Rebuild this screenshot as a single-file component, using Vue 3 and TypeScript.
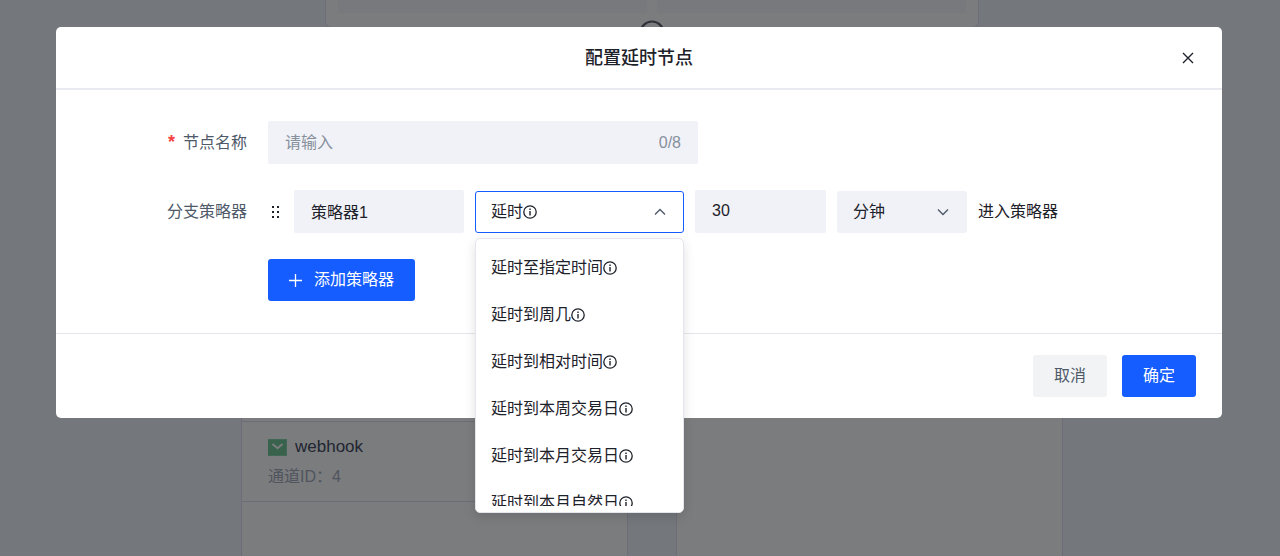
<script setup lang="ts">
import { computed, ref } from 'vue'

const nodeName = ref('')
const nameLimit = 8
const counter = computed(() => `${nodeName.value.length}/${nameLimit}`)

const strategyName = ref('策略器1')
const delayType = ref('延时')
const amount = ref('30')
const unit = ref('分钟')
const units: string[] = ['分钟', '小时', '天']

const delayOptions: string[] = [
  '延时至指定时间',
  '延时到周几',
  '延时到相对时间',
  '延时到本周交易日',
  '延时到本月交易日',
  '延时到本月自然日',
]
</script>

<template>
  <div class="page">
    <div class="canvas" aria-hidden="true">
      <div class="top-card">
        <div class="slot"></div>
        <div class="slot"></div>
        <svg class="anchor" width="26" height="26" viewBox="0 0 26 26" fill="none">
          <circle cx="13" cy="13" r="11.5" stroke="#60656f" stroke-width="2.2" />
        </svg>
      </div>
      <div class="columns">
        <div class="column">
          <div class="channel">
            <div class="channel-title">
              <svg width="19" height="17" viewBox="0 0 19 17" fill="none">
                <rect width="19" height="17" fill="#86d6a8" />
                <rect y="1" width="18" height="15" fill="#76c898" />
                <path d="M4.5 5 9.5 9.2 14.5 5" stroke="#fff" stroke-width="2" />
              </svg>
              <span>webhook</span>
            </div>
            <div class="channel-id">通道ID：4</div>
          </div>
        </div>
        <div class="column"></div>
      </div>
    </div>

    <div class="mask">
      <section class="modal" role="dialog" aria-modal="true" aria-labelledby="dialog-title">
        <header class="modal-header">
          <h1 id="dialog-title">配置延时节点</h1>
          <button class="close" type="button" aria-label="关闭">
            <svg width="12" height="12" viewBox="0 0 12 12" fill="none">
              <path d="M1 1 11 11M11 1 1 11" stroke="#1d2129" stroke-width="1.4" />
            </svg>
          </button>
        </header>

        <form class="modal-body" @submit.prevent>
          <label class="label" for="node-name"><span class="required">*</span>节点名称</label>
          <div class="name-field">
            <input id="node-name" v-model="nodeName" type="text" placeholder="请输入" :maxlength="nameLimit" />
            <span class="counter">{{ counter }}</span>
          </div>

          <label class="label" for="strategy-name">分支策略器</label>
          <div class="strategy">
            <svg class="drag" width="16" height="16" viewBox="0 0 16 16" fill="#1d2129">
              <path d="M4 2h2v2H4zM9 2h2v2H9zM4 7h2v2H4zM9 7h2v2H9zM4 12h2v2H4zM9 12h2v2H9z" />
            </svg>
            <input id="strategy-name" v-model="strategyName" class="text-box strategy-name" type="text" />
            <div class="picker delay open">
              <select v-model="delayType" aria-label="延时类型">
                <option>延时</option>
                <option v-for="option in delayOptions" :key="option">{{ option }}</option>
              </select>
              <svg class="info" width="14" height="14" viewBox="0 0 14 14" fill="none" stroke="#1d2129">
                <circle cx="7" cy="7" r="6.2" stroke-width="1.3" />
                <path d="M7 3.5V5M7 6V10.5" stroke-width="1.4" />
              </svg>
              <svg class="chevron" width="12" height="8" viewBox="0 0 12 8" fill="none">
                <path d="M1 6.5 6 1.5 11 6.5" stroke="#4e5969" stroke-width="1.4" />
              </svg>
              <div class="menu">
                <ul role="listbox" aria-label="延时类型">
                  <li v-for="option in delayOptions" :key="option" role="option" @click="delayType = option">
                    <span>{{ option }}</span>
                    <svg width="14" height="14" viewBox="0 0 14 14" fill="none" stroke="#1d2129">
                      <circle cx="7" cy="7" r="6.2" stroke-width="1.3" />
                      <path d="M7 3.5V5M7 6V10.5" stroke-width="1.4" />
                    </svg>
                  </li>
                </ul>
              </div>
            </div>
            <input v-model="amount" class="text-box amount" type="text" aria-label="时长" />
            <div class="picker unit">
              <select v-model="unit" aria-label="时间单位">
                <option v-for="name in units" :key="name">{{ name }}</option>
              </select>
              <svg class="chevron" width="12" height="8" viewBox="0 0 12 8" fill="none">
                <path d="M1 1.5 6 6.5 11 1.5" stroke="#4e5969" stroke-width="1.4" />
              </svg>
            </div>
            <span class="suffix">进入策略器</span>
          </div>

          <button class="button primary add" type="button">
            <svg width="13" height="13" viewBox="0 0 13 13" fill="none">
              <path d="M6.5 0V13M0 6.5H13" stroke="#fff" stroke-width="1.3" />
            </svg>
            添加策略器
          </button>
        </form>

        <footer class="modal-footer">
          <button class="button secondary" type="button">取消</button>
          <button class="button primary" type="button">确定</button>
        </footer>
      </section>
    </div>
  </div>
</template>

<style>
body {
  margin: 0;
}
</style>

<style scoped>
.page {
  position: relative;
  min-height: 100vh;
  overflow: hidden;
  font-family: 'Liberation Sans', 'Noto Sans CJK SC', sans-serif;
  font-size: 16px;
  line-height: 24px;
  color: #1d2129;
}

.page *,
.page {
  box-sizing: border-box;
}

.canvas {
  position: absolute;
  inset: 0;
  display: flex;
  flex-direction: column;
  align-items: center;
  padding-left: 24px;
  background: #f0f6fc;
}

.top-card {
  position: relative;
  display: flex;
  gap: 10px;
  width: 654px;
  height: 28px;
  padding: 0 12px 14px;
  border: 1px solid #dfe0f5;
  border-top: 0;
  border-radius: 0 0 6px 6px;
  background: #fff;
}

.slot {
  flex: 1;
  border-radius: 0 0 2px 2px;
  background: #f7f8fa;
}

.anchor {
  position: absolute;
  top: 20px;
  left: calc(50% - 13px);
}

.columns {
  display: flex;
  flex: 1;
  gap: 48px;
  width: 822px;
}

.column {
  flex: 1;
  padding-top: 393px;
  border: 1px solid #dfe0f5;
  border-width: 0 1px;
  background: #fff;
}

.channel {
  padding: 13px 26px 12px;
  border: solid #dfe0f5;
  border-width: 1px 0;
}

.channel-title {
  display: flex;
  align-items: center;
  gap: 8px;
  font-size: 17px;
  color: #434c60;
}

.channel-id {
  margin-top: 6px;
  color: #a6adbc;
}

.mask {
  position: relative;
  min-height: 100vh;
  padding: 27px 58px 27px 56px;
  background: rgba(2, 3, 7, 0.52);
}

.modal {
  border-radius: 5px;
  background: #fff;
}

.modal-header {
  display: grid;
  grid-template-columns: 1fr auto 1fr;
  align-items: center;
  height: 63px;
  padding: 0 26px;
  border-bottom: 2px solid #e9eaf0;
}

.modal-header h1 {
  grid-column: 2;
  margin: 0;
  font-size: 18px;
  font-weight: 500;
}

.close {
  display: flex;
  justify-self: end;
  padding: 2px;
  border: 0;
  background: none;
}

.modal-body {
  display: grid;
  grid-template-columns: 191px 1fr;
  align-items: center;
  gap: 26px 21px;
  padding: 31px 0 32px;
}

.label {
  text-align: right;
  color: #4e5969;
}

.required {
  margin-right: 8px;
  font-size: 18px;
  font-weight: 700;
  color: #f53f3f;
}

input,
select,
.button {
  font: inherit;
}

input,
select {
  margin: 0;
  border: 0;
  outline: 0;
  color: inherit;
  background: none;
}

.name-field {
  display: flex;
  width: 430px;
  height: 43px;
  padding: 0 17px;
  align-items: center;
  border-radius: 2px;
  background: #f1f2f8;
}

.name-field input {
  flex: 1;
  min-width: 0;
  padding: 0;
}

.name-field input::placeholder,
.counter {
  color: #86909c;
}

.strategy {
  display: flex;
  align-items: center;
  gap: 11px;
}

.drag {
  margin-right: -1px;
}

.text-box {
  height: 43px;
  padding: 0 17px 2px;
  border-radius: 2px;
  background: #f1f2f8;
}

.strategy-name {
  width: 170px;
}

.amount {
  width: 131px;
}

.picker {
  position: relative;
  height: 42px;
}

.picker select {
  width: 100%;
  height: 100%;
  padding: 0 16px;
  border-radius: 3px;
  appearance: none;
  background: #f1f2f8;
}

.delay {
  width: 209px;
}

.unit {
  width: 130px;
}

.open select {
  padding: 0 15px;
  border: 1px solid #165dff;
  background: #fff;
}

.info {
  position: absolute;
  top: 14px;
  left: 48px;
}

.chevron {
  position: absolute;
  top: 17px;
  right: 18px;
  pointer-events: none;
}

.menu {
  position: absolute;
  z-index: 1;
  top: 47px;
  left: 0;
  width: 100%;
  padding: 6px 0;
  border: 1px solid #e5e6eb;
  border-radius: 5px;
  background: #fff;
  box-shadow: 0 4px 12px rgba(0, 0, 0, 0.12);
}

.menu ul {
  height: 261px;
  margin: 0;
  padding: 0;
  overflow: hidden;
  list-style: none;
}

.menu li {
  display: flex;
  align-items: center;
  height: 47px;
  padding: 0 15px;
}

.button {
  display: inline-flex;
  align-items: center;
  justify-content: center;
  height: 42px;
  padding: 0 21px;
  border: 0;
  border-radius: 3px;
}

.primary {
  color: #fff;
  background: #165dff;
}

.secondary {
  color: #4e5969;
  background: #f2f3f5;
}

.add {
  grid-column: 2;
  justify-self: start;
  gap: 12px;
}

.modal-footer {
  display: flex;
  justify-content: flex-end;
  gap: 15px;
  padding: 21px 26px;
  border-top: 1px solid #e5e6eb;
}
</style>
